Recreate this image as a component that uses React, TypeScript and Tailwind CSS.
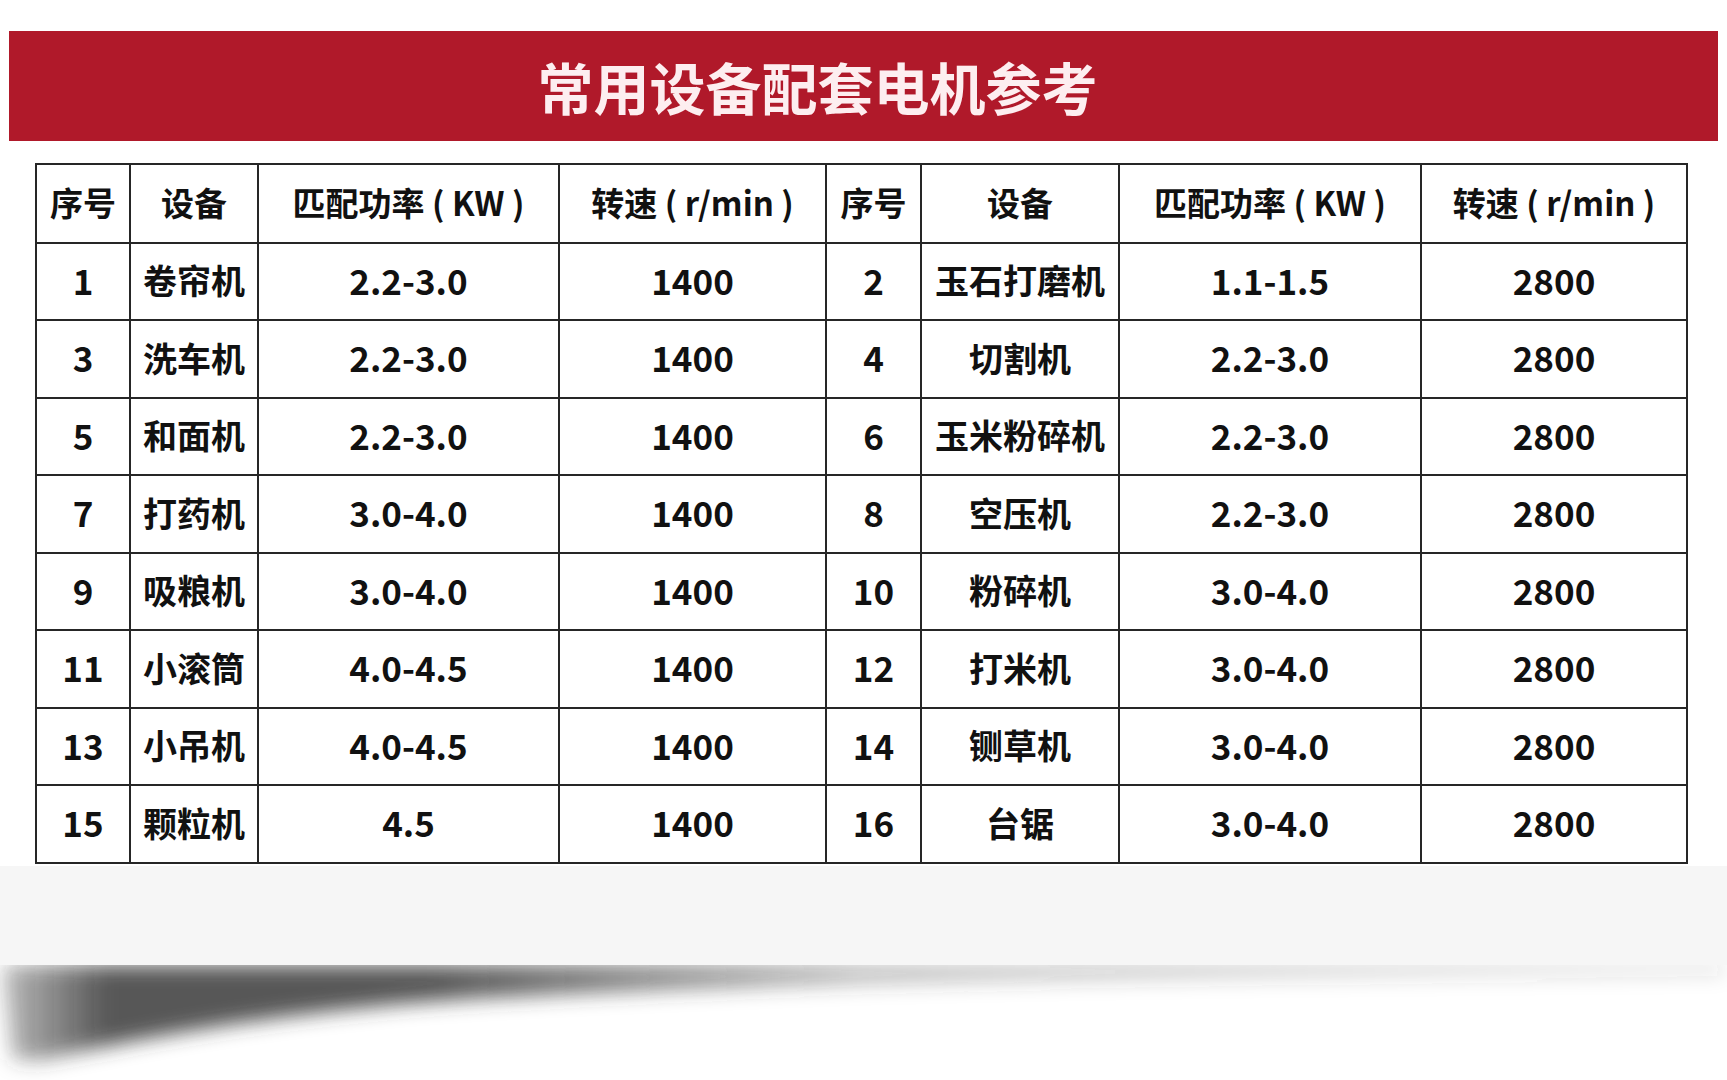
import React from "react";

const rows: [string, string, string, string, string, string, string, string][] = [
  ["1", "卷帘机", "2.2-3.0", "1400", "2", "玉石打磨机", "1.1-1.5", "2800"],
  ["3", "洗车机", "2.2-3.0", "1400", "4", "切割机", "2.2-3.0", "2800"],
  ["5", "和面机", "2.2-3.0", "1400", "6", "玉米粉碎机", "2.2-3.0", "2800"],
  ["7", "打药机", "3.0-4.0", "1400", "8", "空压机", "2.2-3.0", "2800"],
  ["9", "吸粮机", "3.0-4.0", "1400", "10", "粉碎机", "3.0-4.0", "2800"],
  ["11", "小滚筒", "4.0-4.5", "1400", "12", "打米机", "3.0-4.0", "2800"],
  ["13", "小吊机", "4.0-4.5", "1400", "14", "铡草机", "3.0-4.0", "2800"],
  ["15", "颗粒机", "4.5", "1400", "16", "台锯", "3.0-4.0", "2800"],
];

const headers = ["序号", "设备", "匹配功率 ( KW )", "转速 ( r/min )", "序号", "设备", "匹配功率 ( KW )", "转速 ( r/min )"];
const widths = [94, 128, 301, 267, 95, 198, 302, 266];

const font = { fontFamily: '"Noto Sans CJK SC", "Noto Sans", sans-serif' };

const App = () => {
  return (
    <div className="w-[1727px] h-[1080px] bg-white overflow-hidden flex flex-col pt-[31px]" style={font}>
      <div className="mx-[9px] h-[110px] bg-[#b0192a] flex items-center justify-center pr-[92px]">
        <h1 className="text-[56px] font-bold text-[#fdeef0] leading-none">常用设备配套电机参考</h1>
      </div>

      <div className="mt-[22px] ml-[35px] w-[1651px]">
        <table className="w-full border-collapse table-fixed text-[#111]">
          <colgroup>
            {widths.map((w, i) => (
              <col key={i} style={{ width: w }} />
            ))}
          </colgroup>
          <thead>
            <tr className="h-[79px]">
              {headers.map((h, i) => (
                <th key={i} className="border-2 border-[#262626] text-[33px] font-bold text-center whitespace-pre px-0">
                  {h}
                </th>
              ))}
            </tr>
          </thead>
          <tbody>
            {rows.map((r, ri) => (
              <tr key={ri} className="h-[77.5px]">
                {r.map((c, ci) => (
                  <td
                    key={ci}
                    className={
                      "border-2 border-[#262626] text-center font-bold whitespace-nowrap px-0 pb-[3px] " +
                      (ci === 1 || ci === 5 ? "text-[34px]" : "text-[35px]")
                    }
                  >
                    {c}
                  </td>
                ))}
              </tr>
            ))}
          </tbody>
        </table>
      </div>

      <div className="mt-[2px] h-[100px] bg-[#f6f6f6]" />

      <svg width="1727" height="115" viewBox="0 0 1727 115" className="block">
        <defs>
          <linearGradient id="sh" x1="0" y1="0" x2="1" y2="0">
            <stop offset="0" stopColor="#3a3a3a" stopOpacity="0.35" />
            <stop offset="0.06" stopColor="#3a3a3a" stopOpacity="0.85" />
            <stop offset="0.25" stopColor="#3a3a3a" stopOpacity="0.85" />
            <stop offset="0.5" stopColor="#3a3a3a" stopOpacity="0.35" />
            <stop offset="1" stopColor="#3a3a3a" stopOpacity="0.2" />
          </linearGradient>
          <filter id="bl" x="-10%" y="-50%" width="120%" height="200%">
            <feGaussianBlur stdDeviation="10" />
          </filter>
        </defs>
        <path
          d="M0,0 L1727,0 L1727,8 C1300,10 800,14 450,35 C300,45 150,70 40,95 L10,95 Z"
          fill="url(#sh)"
          filter="url(#bl)"
        />
      </svg>
    </div>
  );
};

export default App;
